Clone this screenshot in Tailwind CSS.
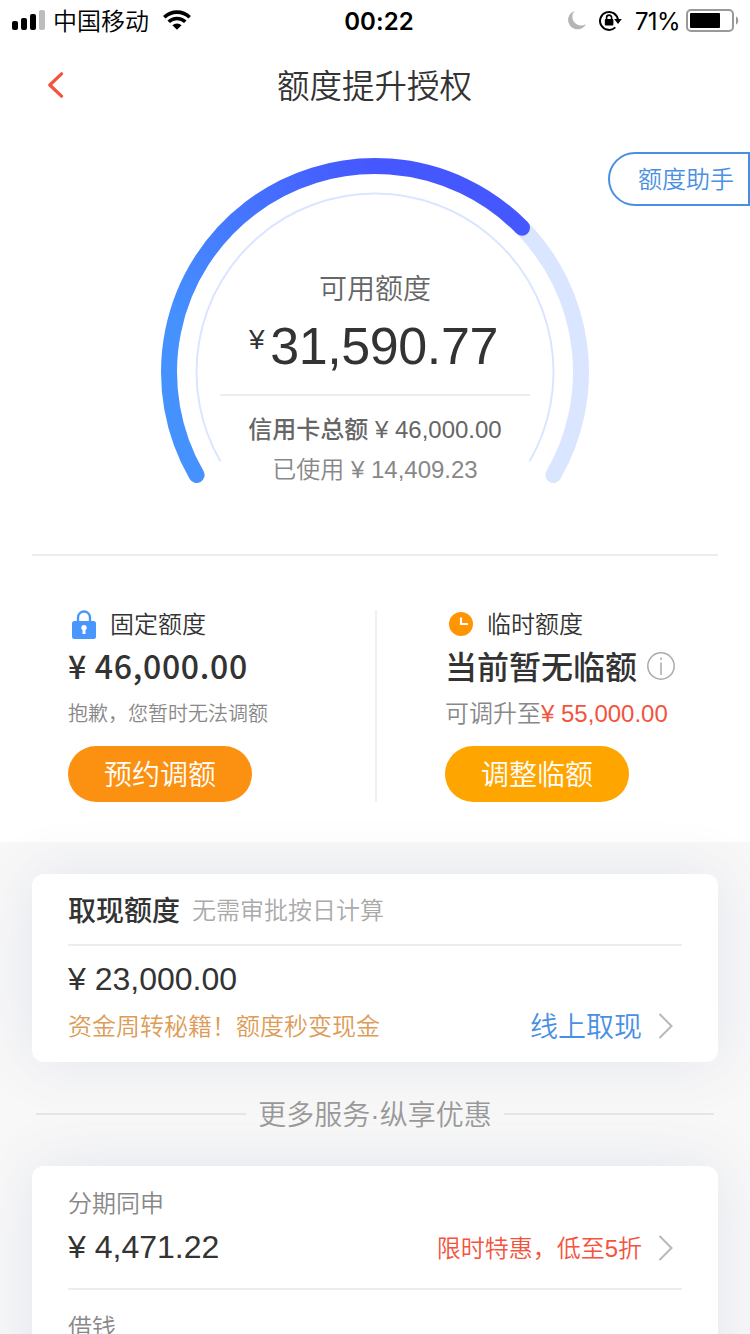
<!DOCTYPE html>
<html lang="zh-CN">
<head>
<meta charset="utf-8">
<title>额度提升授权</title>
<script src="https://cdn.jsdelivr.net/npm/@tailwindcss/browser@4"></script>
</head>
<body class="w-[750px] h-[1334px] overflow-hidden bg-white text-[#333] font-['Liberation_Sans','Noto_Sans_CJK_SC',sans-serif] relative">

<!-- status bar -->
<header class="h-10 grid grid-cols-3 items-center text-black">
  <div class="flex items-center pl-3">
    <svg class="w-[33px] h-5" viewBox="0 0 33 20">
      <rect x="0" y="11" width="6" height="9" rx="2"/><rect x="9" y="8" width="6" height="12" rx="2"/><rect x="18" y="4" width="6" height="16" rx="2"/><rect x="27" y="0" width="6" height="20" rx="2" fill="#bdbdbd"/>
    </svg>
    <span class="ml-2 pt-[3px] text-2xl leading-[37px] whitespace-nowrap font-[350]">中国移动</span>
    <svg class="ml-3.5 w-[28px] h-5" viewBox="0 0 28 20" fill="none" stroke="#000" stroke-width="3.6">
      <path d="M1.300 7.200a18.300 18.300 0 0 1 25.400 0"/><path d="M5.700 11.800a12 12 0 0 1 16.600 0"/><path d="M9.400 15.200a6.800 6.800 0 0 1 9.200 0L14 19.800z" fill="#000" stroke="none"/>
    </svg>
  </div>
  <div class="text-center pl-2 pt-[3px] text-2xl leading-[37px] font-semibold tracking-[0.1px] font-['Inter',sans-serif]">00:22</div>
  <div class="flex items-center justify-end pr-[11px]">
    <svg class="w-[18px] h-[19px]" viewBox="0 0 18 19"><path d="M6.500 0A9.400 9.400 0 1 0 18 12.900 8.700 8.700 0 0 1 6.500 0z" fill="#b5b5b5"/></svg>
    <svg class="ml-[13px] w-[23px] h-[21px]" viewBox="0 0 23 21" fill="none" stroke="#000" stroke-width="2">
      <path d="M16.300 17.400A9 9 0 1 1 19 10"/><path d="M15.200 9h7.600L19 14z" fill="#000" stroke="none"/><rect x="5.800" y="9" width="8.600" height="6.400" rx="1" fill="#000" stroke="none"/><path d="M7.600 9.500V7.600a2.500 2.500 0 0 1 5 0v1.900" stroke-width="1.600"/>
    </svg>
    <span class="ml-[13px] pt-[3px] text-2xl leading-[37px] tracking-[-0.6px] font-['Inter',sans-serif]">71%</span>
    <svg class="ml-[6px] w-[53px] h-[23px]" viewBox="0 0 53 23"><rect x="1" y="1" width="46" height="21" rx="4" fill="none" stroke="#999" stroke-width="2"/><rect x="4" y="4" width="30" height="15" rx="1"/><path d="M50 7.500c3 1 3 7 0 8z" fill="#999"/></svg>
  </div>
</header>

<!-- title bar -->
<nav class="h-[90px] flex items-center px-12">
  <svg class="w-4 h-[26px]" viewBox="0 0 16 26" fill="none" stroke="#f4533d" stroke-width="3.200" stroke-linecap="round" stroke-linejoin="round"><path d="M13.500 1.800L1.800 13l11.700 11.200"/></svg>
  <h1 class="flex-1 text-center pr-[17px] pt-1 text-[32.5px] leading-[86px] font-[350]">额度提升授权</h1>
</nav>

<a class="absolute right-0 top-[152px] w-[142px] h-[54px] rounded-l-full border-2 border-[#4a90e2] text-[#4a90e2] text-2xl leading-[52px] font-[350] pl-7 whitespace-nowrap">额度助手</a>

<!-- credit gauge -->
<section class="grid h-[424px]">
  <svg class="col-start-1 row-start-1 w-[750px] h-[424px]" viewBox="0 130 750 424" fill="none">
    <defs><linearGradient id="arc" gradientUnits="userSpaceOnUse" x1="190" y1="340" x2="375" y2="165"><stop offset="0" stop-color="#4592ff"/><stop offset="1" stop-color="#4557ff"/></linearGradient></defs>
    <path d="M522 227.700A206 206 0 0 1 553.400 475" stroke="#dae6ff" stroke-width="16" stroke-linecap="round"/>
    <path d="M196.600 475A206 206 0 0 1 522 227.700" stroke="url(#arc)" stroke-width="16" stroke-linecap="round"/>
    <path d="M220.500 461.500A178.500 178.500 0 1 1 529.500 461.500" stroke="#dae6ff" stroke-width="2"/>
  </svg>
  <div class="col-start-1 row-start-1 flex flex-col items-center pt-[140px]">
    <p class="h-[38px] text-[28px] leading-10 text-[#666] font-[350]">可用额度</p>
    <p class="h-[86px] flex text-[52px] leading-[76px] tracking-[-0.4px] pr-[3px]"><span class="text-[28px] leading-[64px] mr-[6px]">¥</span>31,590.77</p>
    <div class="w-[310px] h-0.5 bg-[#ededed]"></div>
    <p class="mt-[14px] h-10 text-2xl leading-10 text-[#666]"><span class="font-medium">信用卡总额</span> ¥ 46,000.00</p>
    <p class="h-10 text-2xl leading-10 text-[#888]"><span class="font-[350]">已使用</span> ¥ 14,409.23</p>
  </div>
</section>

<div class="mx-8 h-0.5 bg-[#ededed]"></div>

<!-- fixed and temporary limits -->
<section class="h-[286px] pt-[54px] pl-[68px] flex">
  <div class="w-[307px]">
    <div class="flex h-7 items-center">
      <svg class="ml-1 w-6 h-[29px]" viewBox="0 0 24 29"><path d="M6 12V7.500a6 6 0 0 1 12 0V12" fill="none" stroke="#4a96ff" stroke-width="2.400"/><rect y="11" width="24" height="18" rx="2.500" fill="#4a96ff"/><path d="M12 15a2.700 2.700 0 0 1 1.500 5v4h-3v-4A2.700 2.700 0 0 1 12 15z" fill="#fff"/></svg>
      <span class="ml-3.5 pt-0.5 text-2xl leading-7 font-[350]">固定额度</span>
    </div>
    <p class="h-[58px] text-[32px] leading-[55px] tracking-[0.7px] font-medium font-['Noto_Sans_CJK_SC',sans-serif]">¥ 46,000.00</p>
    <p class="h-[50px] text-xl leading-[37px] text-[#888] font-[350]">抱歉，您暂时无法调额</p>
    <button class="block w-[184px] h-14 rounded-full bg-[#fc9010] text-white text-[28px] pt-1 leading-[52px] font-[350]">预约调额</button>
  </div>
  <div class="w-0.5 h-[192px] bg-[#f0f0f0]"></div>
  <div class="pl-[68px]">
    <div class="flex h-7 items-center">
      <svg class="ml-1 w-6 h-6" viewBox="0 0 24 24"><circle cx="12" cy="12" r="12" fill="#ff9500"/><path d="M12 5.500V12h7" fill="none" stroke="#fff" stroke-width="2.200"/></svg>
      <span class="ml-3.5 pt-0.5 text-2xl leading-7 font-[350]">临时额度</span>
    </div>
    <p class="h-[58px] flex text-[32px] leading-[60px] font-medium">当前暂无临额
      <svg class="mt-[14px] ml-[10px] w-7 h-7" viewBox="0 0 28 28" fill="none" stroke="#aaa"><circle cx="14" cy="14" r="13.200" stroke-width="1.500"/><path d="M14 10.500v12.500M14 5.500v2.500" stroke-width="1.500"/></svg>
    </p>
    <p class="h-[50px] text-2xl leading-[36px] text-[#888]"><span class="font-[350]">可调升至</span><span class="text-[#f4533d]">¥ 55,000.00</span></p>
    <button class="block w-[184px] h-14 rounded-full bg-[#ffa500] text-white text-[28px] pt-1 leading-[52px] font-[350]">调整临额</button>
  </div>
</section>

<main class="h-[492px] bg-[#f8f8f8] px-8 pt-8">
  <!-- cash advance -->
  <section class="h-[188px] rounded-xl bg-white px-9 shadow-[0_0_60px_rgba(70,90,160,0.12)]">
    <div class="h-[72px] border-b-2 border-[#ededed] flex">
      <h2 class="text-[28px] leading-[75px] font-medium">取现额度</h2>
      <span class="ml-3 text-2xl leading-[74px] text-[#aaa] font-[350]">无需审批按日计算</span>
    </div>
    <p class="h-[58px] text-[32px] leading-[66px]">¥ 23,000.00</p>
    <div class="h-11 flex items-center">
      <span class="flex-1 pt-0.5 text-2xl text-[#dc9c58] font-[350]">资金周转秘籍！额度秒变现金</span>
      <span class="pt-1 text-[28px] text-[#4a90e2] font-[350]">线上取现</span>
      <svg class="ml-4 mr-2 w-4 h-[26px]" viewBox="0 0 16 26" fill="none" stroke="#b8b8b8" stroke-width="2"><path d="M1.500 1L13.500 13 1.500 25"/></svg>
    </div>
  </section>

  <div class="h-[104px] px-1 flex items-center">
    <div class="flex-1 h-0.5 bg-[#e4e5e8]"></div>
    <h3 class="w-[258px] pt-[3px] text-center whitespace-nowrap text-[28px] text-[#999] font-[350]">更多服务·纵享优惠</h3>
    <div class="flex-1 h-0.5 bg-[#e4e5e8]"></div>
  </div>

  <!-- more services -->
  <section class="h-[400px] rounded-xl bg-white px-9 shadow-[0_0_60px_rgba(70,90,160,0.12)]">
    <div class="h-[124px] border-b-2 border-[#ededed] pt-[18px]">
      <p class="h-10 text-2xl leading-10 text-[#888] font-[350]">分期同申</p>
      <div class="h-12 flex items-center">
        <span class="flex-1 pb-0.5 text-[32px]">¥ 4,471.22</span>
        <span class="pt-0.5 text-2xl text-[#f4533d] font-[350]">限时特惠，低至5折</span>
        <svg class="ml-4 mr-2 w-4 h-[26px]" viewBox="0 0 16 26" fill="none" stroke="#b8b8b8" stroke-width="2"><path d="M1.500 1L13.500 13 1.500 25"/></svg>
      </div>
    </div>
    <p class="pt-[18px] text-2xl leading-10 text-[#888] font-[350]">借钱</p>
  </section>
</main>
</body>
</html>
